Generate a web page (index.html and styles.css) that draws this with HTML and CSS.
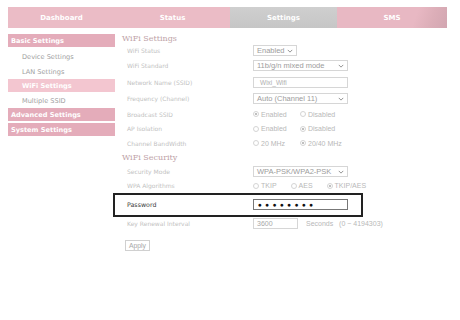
FILE: index.html
```html
<!DOCTYPE html>
<html lang="en">
<head>
  <meta charset="UTF-8">
  <title>Router Settings</title>
  <link rel="stylesheet" href="styles.css">
</head>
<body>
  <!-- Top tabs -->
  <nav class="tabs">
    <a class="tab">Dashboard</a>
    <a class="tab">Status</a>
    <a class="tab active">Settings</a>
    <a class="tab sms">SMS</a>
  </nav>

  <div class="layout">
    <!-- Sidebar -->
    <aside class="sidebar">
      <div class="side-head">Basic Settings</div>
      <div class="side-item">Device Settings</div>
      <div class="side-item">LAN Settings</div>
      <div class="side-item current">WiFi Settings</div>
      <div class="side-item">Multiple SSID</div>
      <div class="side-head">Advanced Settings</div>
      <div class="side-head">System Settings</div>
    </aside>

    <!-- Main form -->
    <main class="content">
      <h2 class="section-title first">WiFi Settings</h2>
      <div class="row r-status">
        <span class="label">WiFi Status</span>
        <div class="select small">Enabled <svg class="chev" viewBox="0 0 8 5"><path d="M1 1l3 3 3-3"/></svg></div>
      </div>
      <div class="row r-std">
        <span class="label">WiFi Standard</span>
        <div class="select">11b/g/n mixed mode <svg class="chev" viewBox="0 0 8 5"><path d="M1 1l3 3 3-3"/></svg></div>
      </div>
      <div class="row r-ssid">
        <span class="label">Network Name (SSID)</span>
        <div class="input wide">Wixi_Wifi</div>
      </div>
      <div class="row r-freq">
        <span class="label">Frequency (Channel)</span>
        <div class="select">Auto (Channel 11) <svg class="chev" viewBox="0 0 8 5"><path d="M1 1l3 3 3-3"/></svg></div>
      </div>
      <div class="row r-radio">
        <span class="label">Broadcast SSID</span>
        <div class="radios">
          <span class="opt"><i class="radio on"></i>Enabled</span>
          <span class="opt"><i class="radio"></i>Disabled</span>
        </div>
      </div>
      <div class="row r-radio">
        <span class="label">AP Isolation</span>
        <div class="radios">
          <span class="opt"><i class="radio"></i>Enabled</span>
          <span class="opt"><i class="radio on"></i>Disabled</span>
        </div>
      </div>
      <div class="row r-radio">
        <span class="label">Channel BandWidth</span>
        <div class="radios">
          <span class="opt"><i class="radio"></i>20 MHz</span>
          <span class="opt"><i class="radio on"></i>20/40 MHz</span>
        </div>
      </div>

      <h2 class="section-title">WiFi Security</h2>
      <div class="row r-mode">
        <span class="label">Security Mode</span>
        <div class="select">WPA-PSK/WPA2-PSK <svg class="chev" viewBox="0 0 8 5"><path d="M1 1l3 3 3-3"/></svg></div>
      </div>
      <div class="row r-algo">
        <span class="label">WPA Algorithms</span>
        <div class="radios algo">
          <span class="opt"><i class="radio"></i>TKIP</span>
          <span class="opt"><i class="radio"></i>AES</span>
          <span class="opt"><i class="radio on"></i>TKIP/AES</span>
        </div>
      </div>
      <div class="row password">
        <span class="label">Password</span>
        <div class="input pass">&#9679;&#9679;&#9679;&#9679;&#9679;&#9679;&#9679;&#9679;</div>
      </div>
      <div class="row r-key">
        <span class="label">Key Renewal Interval</span>
        <div class="input short">3600</div>
        <span class="unit">Seconds &nbsp;&nbsp;(0 ~ 4194303)</span>
      </div>
      <div class="actions">
        <button class="btn">Apply</button>
      </div>
    </main>
  </div>
</body>
</html>
```

FILE: styles.css
```css
/* General */
body {
  margin: 0;
  background: #fff;
  font-family: "DejaVu Sans", Verdana, sans-serif;
  color: #b8b8b8;
}

/* Top tabs */
.tabs {
  display: grid;
  grid-template-columns: 107px 115px 107px 110px;
  margin: 7px 0 0 8px;
  height: 21px;
}

.tab {
  display: flex;
  align-items: center;
  justify-content: center;
  background: #ebbcc6;
  color: #fff;
  font-size: 7px;
  font-weight: bold;
}

.tab.active {
  background: linear-gradient(#cfcfcf, #c6c6c6);
}

.tab.sms {
  background: linear-gradient(110deg, #e8b8c3 70%, #dcaeb8 85%, #d2a6b1 100%);
}

/* Layout */
.layout {
  display: flex;
  margin-left: 8px;
}

/* Sidebar */
.sidebar {
  width: 107px;
  padding-top: 6px;
  display: flex;
  flex-direction: column;
}

.side-head {
  height: 13px;
  margin-bottom: 2px;
  padding-left: 3px;
  display: flex;
  align-items: center;
  background: #e4acba;
  color: #fff;
  font-size: 6.6px;
  font-weight: bold;
}

.side-item {
  height: 15px;
  padding-left: 14px;
  display: flex;
  align-items: center;
  color: #a0a0a0;
  font-size: 6.6px;
}

.side-item.current {
  background: #f3c6d0;
  color: #fff;
  font-weight: bold;
  height: 13px;
  margin-bottom: 1px;
}

/* Content */
.content {
  width: 248px;
  display: flex;
  flex-direction: column;
}

.section-title {
  margin: 0;
  padding-left: 7px;
  font-family: "DejaVu Serif", "Liberation Serif", serif;
  font-weight: normal;
  font-size: 8px;
  color: #bea2a7;
  height: 14px;
  display: flex;
  align-items: center;
  white-space: nowrap;
}

.section-title.first {
  margin-top: 4px;
  height: 12px;
}

.row {
  display: flex;
  align-items: center;
  padding-left: 12px;
  height: 16px;
  font-size: 6px;
  white-space: nowrap;
}

.r-status { height: 13px; }
.r-std { height: 17px; }
.r-freq { height: 17px; }
.r-radio { height: 14.5px; }
.r-mode { height: 14px; }
.r-algo { height: 14px; }
.r-key { height: 13px; }

.label {
  width: 126px;
  flex: none;
  color: #c2c2c2;
}

.select,
.input {
  box-sizing: border-box;
  flex: none;
  height: 11px;
  border: 1px solid #d6d6d6;
  background: #fff;
  color: #9c9c9c;
  font-family: "Liberation Sans", Arial, sans-serif;
  font-size: 7.5px;
  display: flex;
  align-items: center;
  padding: 0 3px;
}

.select {
  width: 95px;
  justify-content: space-between;
}

.select.small {
  width: 44px;
}

.chev {
  width: 6px;
  height: 4px;
  fill: none;
  stroke: #888;
  stroke-width: 1.2;
}

.input.wide {
  width: 95px;
  padding-left: 6px;
  font-size: 6.5px;
  color: #b0b0b0;
}

.radios {
  display: flex;
  color: #b8b8b8;
  font-family: "Liberation Sans", Arial, sans-serif;
  font-size: 7px;
}

.opt {
  display: flex;
  align-items: center;
  width: 47px;
}

.algo .opt {
  width: auto;
  margin-right: 14px;
}

.radio {
  box-sizing: border-box;
  width: 6px;
  height: 6px;
  border: 1px solid #d4d4d4;
  border-radius: 50%;
  margin-right: 2px;
  display: flex;
  align-items: center;
  justify-content: center;
}

.radio.on::after {
  content: "";
  width: 2px;
  height: 2px;
  border-radius: 50%;
  background: #aaa;
}

/* Highlighted password row */
.row.password {
  box-sizing: border-box;
  margin-left: -2px;
  width: 250px;
  height: 24px;
  border: 2px solid #222;
  padding-left: 12px;
}

.password .label {
  color: #3a3a3a;
  font-size: 6.3px;
}

.input.pass {
  width: 95px;
  border-color: #777;
  color: #111;
  font-size: 6.5px;
  letter-spacing: 3.4px;
  padding-left: 4px;
}

.input.short {
  width: 45px;
  color: #a8a8a8;
  font-size: 7px;
}

.unit {
  margin-left: 8px;
  color: #b8b8b8;
  font-family: "Liberation Sans", Arial, sans-serif;
  font-size: 7px;
}

.actions {
  padding: 3px 0 0 10px;
}

.btn {
  height: 11px;
  padding: 0 3px;
  border: 1px solid #d0d0d0;
  background: #fff;
  color: #a8a8a8;
  font-family: "Liberation Sans", Arial, sans-serif;
  font-size: 6.8px;
  line-height: 1;
}
```
